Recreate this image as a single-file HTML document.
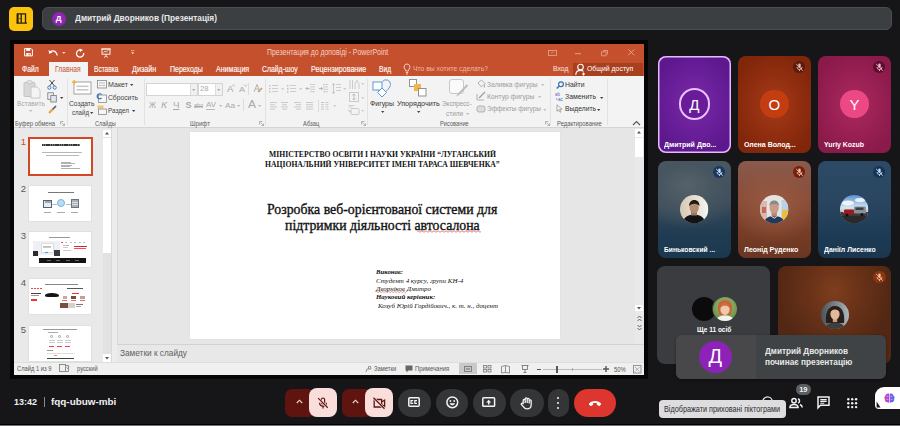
<!DOCTYPE html>
<html><head><meta charset="utf-8">
<style>
*{margin:0;padding:0;box-sizing:border-box}
html,body{width:900px;height:426px;overflow:hidden;background:#161618;font-family:"Liberation Sans",sans-serif;position:relative}
.a{position:absolute}
.t{position:absolute;white-space:pre;line-height:1}
svg{position:absolute;overflow:visible}
</style></head><body>
<div class="a" style="left:0px;top:423.6px;width:900px;height:1.2px;background:#000"></div>
<div class="a" style="left:0px;top:424.8px;width:900px;height:1.2px;background:#6e7073"></div>
<div class="a" style="left:9.2px;top:6.9px;width:23.8px;height:23.8px;background:#fbc30b;border-radius:5px"></div>
<svg style="left:15px;top:12px;" width="13" height="13" viewBox="0 0 13 13"><path d="M2.5 11.2V1.8h8v9.4M6.2 2v9.2M1.5 11.2h10.5" stroke="#2a2008" stroke-width="1.3" fill="none"/><path d="M2.6 1.8v9.4" stroke="#2a2008" stroke-width="1.9"/><circle cx="5" cy="6.6" r="0.7" fill="#2a2008"/></svg>
<div class="a" style="left:42px;top:7px;width:850px;height:23.4px;background:#3c3f42;border:1px solid #4b4e51;border-radius:6px"></div>
<div class="a" style="left:51.7px;top:11.8px;width:14px;height:14px;background:#8f25b3;border-radius:50%"></div>
<div class="a" style="left:10px;top:40px;width:637.5px;height:338.5px;background:#050505"></div>
<div class="a" style="left:13.5px;top:43.5px;width:630.5px;height:331.5px;background:#f3f3f3"></div>
<div class="a" style="left:13.5px;top:43.5px;width:630.5px;height:32.5px;background:#c4502d"></div>
<div class="a" style="left:573px;top:63px;width:70px;height:13px;background:#a8401f"></div>
<div class="a" style="left:49px;top:62px;width:39px;height:14px;background:#f3f3f3"></div>
<svg style="left:24px;top:48.4px;" width="9" height="8.5" viewBox="0 0 9 8.5"><path d="M0.6 0.6h6.6l1.2 1.2v6.1H0.6z" fill="none" stroke="#fff" stroke-width="1"/><rect x="2.2" y="0.6" width="4" height="2.3" fill="#fff"/><rect x="2.3" y="5" width="4.4" height="2.9" fill="#fff"/><rect x="4.6" y="5.6" width="1" height="1.8" fill="#c4502d"/></svg>
<svg style="left:48.4px;top:49px;" width="10" height="7.5" viewBox="0 0 10 7.5"><path d="M2.2 3.2C4 1.2 8.2 1.2 9.2 6.5" stroke="#fff" stroke-width="1.2" fill="none"/><path d="M0.5 1 L1.2 4.8 L4.6 3.4 Z" fill="#fff"/></svg>
<svg style="left:62px;top:51.5px;" width="4" height="3" viewBox="0 0 4 3"><path d="M0 0h3.6l-1.8 2z" fill="#f5d0c0"/></svg>
<svg style="left:76px;top:48.8px;" width="9" height="8.8" viewBox="0 0 9 8.8"><path d="M7.6 3.8A3.6 3.6 0 1 1 4.5 1" stroke="#fff" stroke-width="1.3" fill="none"/><path d="M3.6 -0.6 L7 1 L4 3 Z" fill="#fff"/></svg>
<svg style="left:101px;top:47.8px;" width="10" height="10" viewBox="0 0 10 10"><rect x="1" y="1" width="8" height="5.2" fill="none" stroke="#fff" stroke-width="0.9"/><path d="M0.3 1h9.4M5 6.2v1.8M3 9.5l2-1.5 2 1.5" stroke="#fff" stroke-width="0.8" fill="none"/><path d="M2.6 4.6l1.6-1.6 1.2 1 1.8-1.8" stroke="#fff" stroke-width="0.8" fill="none"/></svg>
<svg style="left:130.7px;top:50px;" width="3.5" height="4.5" viewBox="0 0 3.5 4.5"><path d="M0 0.6h3.4" stroke="#f5d0c0" stroke-width="0.7"/><path d="M0 2.2h3.4l-1.7 2z" fill="#f5d0c0"/></svg>
<svg style="left:547.5px;top:50px;" width="9" height="6" viewBox="0 0 9 6"><rect x="0.5" y="0.5" width="8" height="5" fill="none" stroke="#e8a890" stroke-width="0.8"/><path d="M3 3.2l1.5-1.2 1.5 1.2" stroke="#e8a890" stroke-width="0.7" fill="none"/></svg>
<svg style="left:575px;top:52.5px;" width="6" height="1.5" viewBox="0 0 6 1.5"><path d="M0 0.7h6" stroke="#e8a890" stroke-width="0.9"/></svg>
<svg style="left:601px;top:49.5px;" width="7" height="6" viewBox="0 0 7 6"><path d="M2 0.5h4.5v4M0.5 1.8h4.5v4h-4.5z" stroke="#e8a890" fill="none" stroke-width="0.8"/></svg>
<svg style="left:627.5px;top:49.3px;" width="6.5" height="6.5" viewBox="0 0 6.5 6.5"><path d="M0.3 0.3l6 6M6.3 0.3l-6 6" stroke="#e8a890" stroke-width="0.9"/></svg>
<svg style="left:403px;top:63px;" width="8" height="12" viewBox="0 0 8 12"><path d="M4 1a3 3 0 0 0-2 5.2c.5.5.7 1 .7 1.8h2.6c0-.8.2-1.3.7-1.8A3 3 0 0 0 4 1zM2.8 9.5h2.4M3 11h2" stroke="#f8dcd2" stroke-width="0.9" fill="none"/></svg>
<svg style="left:575px;top:63px;" width="12" height="13" viewBox="0 0 12 13"><circle cx="5.5" cy="4" r="2.8" stroke="#fff" stroke-width="1.1" fill="none"/><path d="M0.8 12c0-3 2-4.6 4.7-4.6 1.3 0 2.3.3 3 .9M8.5 9.5v3M7 11h3" stroke="#fff" stroke-width="1.1" fill="none"/></svg>
<div class="a" style="left:14px;top:127px;width:630px;height:1px;background:#d4d4d4"></div>
<div class="a" style="left:66.5px;top:79px;width:1px;height:46px;background:#e2e2e2"></div>
<div class="a" style="left:143.5px;top:79px;width:1px;height:46px;background:#e2e2e2"></div>
<div class="a" style="left:264.5px;top:79px;width:1px;height:46px;background:#e2e2e2"></div>
<div class="a" style="left:366.8px;top:79px;width:1px;height:46px;background:#e2e2e2"></div>
<div class="a" style="left:550px;top:79px;width:1px;height:46px;background:#e2e2e2"></div>
<div class="a" style="left:607px;top:79px;width:1px;height:46px;background:#e2e2e2"></div>
<svg style="left:59.5px;top:120.5px;" width="5" height="5" viewBox="0 0 5 5"><path d="M0.5 0.5h3M0.5 0.5v3M1.5 1.5l3 3M4.5 2.5v2h-2" stroke="#9a9a9a" stroke-width="0.7" fill="none"/></svg>
<svg style="left:258.5px;top:120.5px;" width="5" height="5" viewBox="0 0 5 5"><path d="M0.5 0.5h3M0.5 0.5v3M1.5 1.5l3 3M4.5 2.5v2h-2" stroke="#9a9a9a" stroke-width="0.7" fill="none"/></svg>
<svg style="left:360.5px;top:120.5px;" width="5" height="5" viewBox="0 0 5 5"><path d="M0.5 0.5h3M0.5 0.5v3M1.5 1.5l3 3M4.5 2.5v2h-2" stroke="#9a9a9a" stroke-width="0.7" fill="none"/></svg>
<svg style="left:544.5px;top:120.5px;" width="5" height="5" viewBox="0 0 5 5"><path d="M0.5 0.5h3M0.5 0.5v3M1.5 1.5l3 3M4.5 2.5v2h-2" stroke="#9a9a9a" stroke-width="0.7" fill="none"/></svg>
<svg style="left:632px;top:120px;" width="9" height="6" viewBox="0 0 9 6"><path d="M1 5l3.5-3.5L8 5" stroke="#555" stroke-width="1.1" fill="none"/></svg>
<svg style="left:23px;top:80px;" width="19" height="18" viewBox="0 0 19 18"><rect x="1" y="2.5" width="11" height="14" rx="1" fill="#d8d8d8" stroke="#c4c4c4"/><rect x="4" y="0.8" width="5" height="3" rx="1" fill="#e8e8e8" stroke="#bbb" stroke-width="0.8"/><path d="M8 7h6l3 3v8H8z" fill="#f4f4f4" stroke="#c4c4c4" stroke-width="0.9"/></svg>
<svg style="left:28.5px;top:110px;" width="4" height="3" viewBox="0 0 4 3"><path d="M0 0h3.4L1.7 2z" fill="#bbb"/></svg>
<svg style="left:47px;top:79px;" width="10" height="11" viewBox="0 0 10 11"><path d="M2.5 1l5 6M7.5 1l-5 6" stroke="#333" stroke-width="0.9"/><circle cx="2.3" cy="8.6" r="1.6" fill="none" stroke="#3b7fc4" stroke-width="1"/><circle cx="7.7" cy="8.6" r="1.6" fill="none" stroke="#3b7fc4" stroke-width="1"/></svg>
<svg style="left:47px;top:92px;" width="11" height="11" viewBox="0 0 11 11"><rect x="0.8" y="0.8" width="5.5" height="6.5" fill="#f0f0f0" stroke="#777" stroke-width="0.8"/><rect x="3.8" y="3.5" width="5.5" height="6.5" fill="#dfe8f0" stroke="#777" stroke-width="0.8"/></svg>
<svg style="left:59.5px;top:97px;" width="4" height="3" viewBox="0 0 4 3"><path d="M0 0h3.4L1.7 2z" fill="#444"/></svg>
<svg style="left:47.5px;top:105px;" width="10" height="9" viewBox="0 0 10 9"><path d="M1 8l3.5-3.5" stroke="#e8a33a" stroke-width="2.2"/><path d="M4.5 4.5l3.5-3.5" stroke="#555" stroke-width="1.6"/></svg>
<svg style="left:71px;top:79px;" width="22" height="17" viewBox="0 0 22 17"><rect x="3" y="3" width="17" height="12" fill="#fff" stroke="#9a9a9a" stroke-width="0.9"/><rect x="5.5" y="6.5" width="12" height="1.6" fill="#c8c8c8"/><rect x="5.5" y="10" width="12" height="1.6" fill="#c8c8c8"/><path d="M1 3.2h4.4M3.2 1v4.4" stroke="#e9b64a" stroke-width="1.6"/></svg>
<svg style="left:90px;top:111.5px;" width="4" height="3" viewBox="0 0 4 3"><path d="M0 0h3.4L1.7 2z" fill="#444"/></svg>
<svg style="left:96.5px;top:80px;" width="10" height="9" viewBox="0 0 10 9"><rect x="0.5" y="0.5" width="9" height="7.5" fill="#f6f6f6" stroke="#888" stroke-width="0.8"/><path d="M2 3h6M2 5.5h2.5M5.5 5.5h2.5" stroke="#aaa" stroke-width="0.8"/></svg>
<svg style="left:129.5px;top:84px;" width="4" height="3" viewBox="0 0 4 3"><path d="M0 0h3.4L1.7 2z" fill="#444"/></svg>
<svg style="left:96.5px;top:92.5px;" width="10" height="10" viewBox="0 0 10 10"><rect x="1.5" y="2" width="8" height="7.5" fill="#f6f6f6" stroke="#888" stroke-width="0.8"/><path d="M4.5 1.5a2.5 2.5 0 1 0 0 3.5" stroke="#2f6fb5" stroke-width="1.2" fill="none"/></svg>
<svg style="left:96.5px;top:105px;" width="10" height="10" viewBox="0 0 10 10"><rect x="0.5" y="0.5" width="6" height="3" fill="#f2c27a"/><rect x="1.5" y="4" width="8" height="5.5" fill="#f6f6f6" stroke="#888" stroke-width="0.8"/></svg>
<svg style="left:131.5px;top:110px;" width="4" height="3" viewBox="0 0 4 3"><path d="M0 0h3.4L1.7 2z" fill="#444"/></svg>
<div class="a" style="left:146px;top:83px;width:52px;height:12.5px;background:#fff;border:1px solid #d4d4d4"></div>
<div class="a" style="left:189.5px;top:84px;width:7.5px;height:10.5px;background:#f0f0f0;border-left:1px solid #ddd"></div>
<svg style="left:191.5px;top:88.5px;" width="4" height="3" viewBox="0 0 4 3"><path d="M0 0h3.4L1.7 2z" fill="#aaa"/></svg>
<div class="a" style="left:197.5px;top:83px;width:25px;height:12.5px;background:#fff;border:1px solid #d4d4d4"></div>
<div class="a" style="left:214.5px;top:84px;width:7.5px;height:10.5px;background:#f0f0f0;border-left:1px solid #ddd"></div>
<svg style="left:216.5px;top:88.5px;" width="4" height="3" viewBox="0 0 4 3"><path d="M0 0h3.4L1.7 2z" fill="#aaa"/></svg>
<svg style="left:232px;top:84px;" width="3" height="3" viewBox="0 0 3 3"><path d="M0 2.5l1.5-2 1.5 2" stroke="#aaa" stroke-width="0.6" fill="none"/></svg>
<svg style="left:243.5px;top:84px;" width="3" height="3" viewBox="0 0 3 3"><path d="M0 0.5l1.5 2 1.5-2" stroke="#aaa" stroke-width="0.6" fill="none"/></svg>
<div class="a" style="left:248px;top:83px;width:1px;height:12px;background:#dcdcdc"></div>
<svg style="left:253px;top:83px;" width="10" height="11" viewBox="0 0 10 11"><path d="M1 9L4 1.5 7 9M2.2 6h3.6" stroke="#aaa" stroke-width="0.9" fill="none"/><path d="M5 9l4-4" stroke="#c9a070" stroke-width="1.6"/></svg>
<div class="a" style="left:206px;top:108.5px;width:9px;height:1px;background:#bbb"></div>
<svg style="left:219px;top:105px;" width="4" height="3" viewBox="0 0 4 3"><path d="M0 0h3.4L1.7 2z" fill="#bbb"/></svg>
<svg style="left:236.5px;top:105px;" width="4" height="3" viewBox="0 0 4 3"><path d="M0 0h3.4L1.7 2z" fill="#bbb"/></svg>
<div class="a" style="left:243px;top:99px;width:1px;height:12px;background:#dcdcdc"></div>
<svg style="left:258px;top:105px;" width="4" height="3" viewBox="0 0 4 3"><path d="M0 0h3.4L1.7 2z" fill="#bbb"/></svg>
<svg style="left:269px;top:85px;" width="10" height="8" viewBox="0 0 10 8"><rect x="0" y="0" width="1.5" height="1.5" fill="#c6c6c6"/><rect x="0" y="3" width="1.5" height="1.5" fill="#c6c6c6"/><rect x="0" y="6" width="1.5" height="1.5" fill="#c6c6c6"/><rect x="3" y="0" width="6" height="1" fill="#cdcdcd"/><rect x="3" y="3" width="6" height="1" fill="#cdcdcd"/><rect x="3" y="6" width="6" height="1" fill="#cdcdcd"/></svg>
<svg style="left:281px;top:88px;" width="4" height="3" viewBox="0 0 4 3"><path d="M0 0h3.4L1.7 2z" fill="#cdcdcd"/></svg>
<svg style="left:287px;top:85px;" width="10" height="8" viewBox="0 0 10 8"><rect x="0" y="0" width="1.5" height="1.8" fill="#c6c6c6"/><rect x="3" y="0" width="6" height="1" fill="#cdcdcd"/><rect x="0" y="3" width="1.5" height="1.8" fill="#c6c6c6"/><rect x="3" y="3" width="6" height="1" fill="#cdcdcd"/><rect x="0" y="6" width="1.5" height="1.8" fill="#c6c6c6"/><rect x="3" y="6" width="6" height="1" fill="#cdcdcd"/></svg>
<svg style="left:299px;top:88px;" width="4" height="3" viewBox="0 0 4 3"><path d="M0 0h3.4L1.7 2z" fill="#cdcdcd"/></svg>
<svg style="left:306px;top:84px;" width="9" height="10" viewBox="0 0 9 10"><rect x="4" y="0.0" width="5" height="1" fill="#cdcdcd"/><rect x="4" y="2.4" width="5" height="1" fill="#cdcdcd"/><rect x="4" y="4.8" width="5" height="1" fill="#cdcdcd"/><rect x="4" y="7.199999999999999" width="5" height="1" fill="#cdcdcd"/><path d="M0 4.5h3.5M0 4.5l1.5-1.5M0 4.5l1.5 1.5" stroke="#b0b0b0" stroke-width="0.9"/></svg>
<svg style="left:318.5px;top:84px;" width="9" height="10" viewBox="0 0 9 10"><rect x="4" y="0.0" width="5" height="1" fill="#cdcdcd"/><rect x="4" y="2.4" width="5" height="1" fill="#cdcdcd"/><rect x="4" y="4.8" width="5" height="1" fill="#cdcdcd"/><rect x="4" y="7.199999999999999" width="5" height="1" fill="#cdcdcd"/><path d="M0 4.5h3.5M3.5 4.5l-1.5-1.5M3.5 4.5l-1.5 1.5" stroke="#b0b0b0" stroke-width="0.9"/></svg>
<svg style="left:331.5px;top:83px;" width="9" height="11" viewBox="0 0 9 11"><path d="M1.5 0.5v10M0 2l1.5-1.5L3 2M0 9l1.5 1.5L3 9" stroke="#bdbdbd" stroke-width="0.8" fill="none"/><rect x="4" y="1" width="5" height="1" fill="#cdcdcd"/><rect x="4" y="4" width="5" height="1" fill="#cdcdcd"/><rect x="4" y="7" width="5" height="1" fill="#cdcdcd"/></svg>
<svg style="left:343px;top:88px;" width="4" height="3" viewBox="0 0 4 3"><path d="M0 0h3.4L1.7 2z" fill="#cdcdcd"/></svg>
<svg style="left:349px;top:79px;" width="10" height="11" viewBox="0 0 10 11"><path d="M1 1v9M3.5 1v9" stroke="#c6c6c6" stroke-width="0.9"/><path d="M6 10V5l2-3.5L10 5v5" stroke="#c6c6c6" stroke-width="0.9" fill="none"/></svg>
<svg style="left:360.5px;top:83px;" width="4" height="3" viewBox="0 0 4 3"><path d="M0 0h3.4L1.7 2z" fill="#cdcdcd"/></svg>
<svg style="left:349px;top:92px;" width="10" height="10" viewBox="0 0 10 10"><rect x="0.5" y="0.5" width="9" height="9" fill="none" stroke="#c6c6c6" stroke-width="0.9"/><path d="M5 2v6M3.5 3.5L5 2l1.5 1.5M3.5 6.5L5 8l1.5-1.5" stroke="#b0b0b0" stroke-width="0.8" fill="none"/></svg>
<svg style="left:360.5px;top:97px;" width="4" height="3" viewBox="0 0 4 3"><path d="M0 0h3.4L1.7 2z" fill="#cdcdcd"/></svg>
<svg style="left:348px;top:105px;" width="12" height="10" viewBox="0 0 12 10"><path d="M0.5 0.5h6M0.5 2h4" stroke="#c6c6c6" stroke-width="0.8"/><rect x="3" y="3.5" width="8" height="6" rx="1" fill="none" stroke="#c6c6c6" stroke-width="0.9"/><path d="M0 5l3 2" stroke="#b0b0b0" stroke-width="0.8"/></svg>
<svg style="left:360.5px;top:110px;" width="4" height="3" viewBox="0 0 4 3"><path d="M0 0h3.4L1.7 2z" fill="#cdcdcd"/></svg>
<svg style="left:270px;top:102px;" width="8" height="8" viewBox="0 0 8 8"><rect x="0" y="0.0" width="7" height="1" fill="#cacaca"/><rect x="0" y="2.2" width="5" height="1" fill="#cacaca"/><rect x="0" y="4.4" width="7" height="1" fill="#cacaca"/><rect x="0" y="6.6000000000000005" width="5" height="1" fill="#cacaca"/></svg>
<svg style="left:281px;top:102px;" width="8" height="8" viewBox="0 0 8 8"><rect x="0.0" y="0.0" width="7" height="1" fill="#cacaca"/><rect x="1.0" y="2.2" width="5" height="1" fill="#cacaca"/><rect x="0.0" y="4.4" width="7" height="1" fill="#cacaca"/><rect x="1.0" y="6.6000000000000005" width="5" height="1" fill="#cacaca"/></svg>
<svg style="left:294px;top:102px;" width="8" height="8" viewBox="0 0 8 8"><rect x="0" y="0.0" width="7" height="1" fill="#cacaca"/><rect x="2" y="2.2" width="5" height="1" fill="#cacaca"/><rect x="0" y="4.4" width="7" height="1" fill="#cacaca"/><rect x="2" y="6.6000000000000005" width="5" height="1" fill="#cacaca"/></svg>
<svg style="left:305.5px;top:102px;" width="8" height="8" viewBox="0 0 8 8"><rect x="0" y="0.0" width="7" height="1" fill="#cacaca"/><rect x="0" y="2.2" width="7" height="1" fill="#cacaca"/><rect x="0" y="4.4" width="7" height="1" fill="#cacaca"/><rect x="0" y="6.6000000000000005" width="7" height="1" fill="#cacaca"/></svg>
<div class="a" style="left:317.5px;top:100px;width:1px;height:12px;background:#dcdcdc"></div>
<svg style="left:321px;top:102px;" width="8" height="8" viewBox="0 0 8 8"><rect x="0" y="0.0" width="3" height="1" fill="#cacaca"/><rect x="4.5" y="0.0" width="3" height="1" fill="#cacaca"/><rect x="0" y="2.2" width="3" height="1" fill="#cacaca"/><rect x="4.5" y="2.2" width="3" height="1" fill="#cacaca"/><rect x="0" y="4.4" width="3" height="1" fill="#cacaca"/><rect x="4.5" y="4.4" width="3" height="1" fill="#cacaca"/><rect x="0" y="6.6000000000000005" width="3" height="1" fill="#cacaca"/><rect x="4.5" y="6.6000000000000005" width="3" height="1" fill="#cacaca"/></svg>
<svg style="left:332.5px;top:105px;" width="4" height="3" viewBox="0 0 4 3"><path d="M0 0h3.4L1.7 2z" fill="#cdcdcd"/></svg>
<svg style="left:372px;top:79px;" width="21" height="18" viewBox="0 0 21 18"><path d="M10.5 2.5a4.5 4.5 0 0 1 8 3c0 3-4 6.5-8 10-4-3.5-8-7-8-10" fill="none" stroke="#5b9bd5" stroke-width="1"/><rect x="1" y="3" width="9" height="8" fill="#fff" stroke="#5b9bd5" stroke-width="1"/><path d="M10 9l4.5 4.5-4.5 4.5-4.5-4.5z" fill="#fff" stroke="#5b9bd5" stroke-width="1"/></svg>
<svg style="left:380.5px;top:111px;" width="4" height="3" viewBox="0 0 4 3"><path d="M0 0h3.4L1.7 2z" fill="#444"/></svg>
<svg style="left:409px;top:79px;" width="18" height="18" viewBox="0 0 18 18"><rect x="0.5" y="0.5" width="7" height="7" fill="#fff" stroke="#888" stroke-width="0.9"/><rect x="5" y="5" width="7" height="7" fill="#f0b84a"/><rect x="9.5" y="9.5" width="7.5" height="7.5" fill="#fff" stroke="#888" stroke-width="0.9"/></svg>
<svg style="left:416.5px;top:111px;" width="4" height="3" viewBox="0 0 4 3"><path d="M0 0h3.4L1.7 2z" fill="#444"/></svg>
<svg style="left:449px;top:79px;" width="19" height="18" viewBox="0 0 19 18"><rect x="0.5" y="0.5" width="14" height="14" rx="2.5" fill="#fafafa" stroke="#c8c8c8" stroke-width="1"/><path d="M18 5L9 14.5l-2 3 3-1.5 9-9z" fill="#bbb"/></svg>
<svg style="left:465.5px;top:113px;" width="4" height="3" viewBox="0 0 4 3"><path d="M0 0h3.4L1.7 2z" fill="#bbb"/></svg>
<svg style="left:476px;top:79px;" width="10" height="10" viewBox="0 0 10 10"><path d="M2 4l3.5-3 3.5 3.5-3.5 3.5z" fill="none" stroke="#aaa" stroke-width="0.9"/><path d="M8.5 5.5v3" stroke="#aaa" stroke-width="1"/></svg>
<svg style="left:541px;top:84px;" width="4" height="3" viewBox="0 0 4 3"><path d="M0 0h3.4L1.7 2z" fill="#c0c0c0"/></svg>
<svg style="left:476px;top:91px;" width="10" height="10" viewBox="0 0 10 10"><path d="M1 3v6h7" stroke="#aaa" stroke-width="0.9" fill="none"/><path d="M3 7l6-6" stroke="#999" stroke-width="1.1"/></svg>
<svg style="left:537.5px;top:96px;" width="4" height="3" viewBox="0 0 4 3"><path d="M0 0h3.4L1.7 2z" fill="#c0c0c0"/></svg>
<svg style="left:476px;top:104px;" width="10" height="9" viewBox="0 0 10 9"><rect x="1" y="2" width="8" height="6" rx="2" fill="#ddd" stroke="#aaa" stroke-width="0.9"/></svg>
<svg style="left:543px;top:108.5px;" width="4" height="3" viewBox="0 0 4 3"><path d="M0 0h3.4L1.7 2z" fill="#c0c0c0"/></svg>
<svg style="left:555.5px;top:80.8px;" width="8" height="8" viewBox="0 0 8 8"><circle cx="5" cy="3.2" r="2.4" fill="none" stroke="#2e75b6" stroke-width="1.2"/><path d="M3.3 5l-2.6 2.6" stroke="#2e75b6" stroke-width="1.4"/></svg>
<svg style="left:555px;top:91.5px;" width="10" height="10" viewBox="0 0 10 10"><text x="0" y="4" font-size="4.5" fill="#7a5fa8" font-family="Liberation Sans">ab</text><text x="3" y="9" font-size="4.5" fill="#2e75b6" font-family="Liberation Sans">ac</text><path d="M1 6.5l1.5 1" stroke="#2e75b6" stroke-width="0.8"/></svg>
<svg style="left:600px;top:96.5px;" width="4" height="3" viewBox="0 0 4 3"><path d="M0 0h3.4L1.7 2z" fill="#444"/></svg>
<svg style="left:556px;top:104px;" width="8" height="9" viewBox="0 0 8 9"><path d="M1 0.8v6.5l1.7-1.6 1.3 2.6 1-.5-1.3-2.5h2.4z" fill="#fafafa" stroke="#888" stroke-width="0.7"/></svg>
<svg style="left:597px;top:108.5px;" width="4" height="3" viewBox="0 0 4 3"><path d="M0 0h3.4L1.7 2z" fill="#444"/></svg>
<div class="t" style="left:55.85px;top:14.68px;font-size:8px;font-weight:bold;font-style:normal;color:#fff;font-family:'Liberation Sans',sans-serif;">Д</div>
<div class="t" style="left:75.00px;top:13.40px;font-size:9.8px;font-weight:bold;font-style:normal;color:#e8e8e8;font-family:'Liberation Sans',sans-serif;transform:scaleX(0.8455);transform-origin:left top;">Дмитрий Дворников (Презентація)</div>
<div class="t" style="left:267.00px;top:48.88px;font-size:8.2px;font-weight:normal;font-style:normal;color:#f6d2c4;font-family:'Liberation Sans',sans-serif;transform:scaleX(0.8443);transform-origin:left top;">Презентация до доповіді - PowerPoint</div>
<div class="t" style="left:21.80px;top:65.23px;font-size:8.5px;font-weight:normal;font-style:normal;color:#fff8f5;font-family:'Liberation Sans',sans-serif;transform:scaleX(0.7943);transform-origin:left top;-webkit-text-stroke:0.15px #fff;">Файл</div>
<div class="t" style="left:94.00px;top:65.23px;font-size:8.5px;font-weight:normal;font-style:normal;color:#fff8f5;font-family:'Liberation Sans',sans-serif;transform:scaleX(0.7723);transform-origin:left top;-webkit-text-stroke:0.15px #fff;">Вставка</div>
<div class="t" style="left:131.80px;top:65.23px;font-size:8.5px;font-weight:normal;font-style:normal;color:#fff8f5;font-family:'Liberation Sans',sans-serif;transform:scaleX(0.8470);transform-origin:left top;-webkit-text-stroke:0.15px #fff;">Дизайн</div>
<div class="t" style="left:169.50px;top:65.23px;font-size:8.5px;font-weight:normal;font-style:normal;color:#fff8f5;font-family:'Liberation Sans',sans-serif;transform:scaleX(0.8252);transform-origin:left top;-webkit-text-stroke:0.15px #fff;">Переходы</div>
<div class="t" style="left:215.80px;top:65.23px;font-size:8.5px;font-weight:normal;font-style:normal;color:#fff8f5;font-family:'Liberation Sans',sans-serif;transform:scaleX(0.8320);transform-origin:left top;-webkit-text-stroke:0.15px #fff;">Анимация</div>
<div class="t" style="left:262.40px;top:65.23px;font-size:8.5px;font-weight:normal;font-style:normal;color:#fff8f5;font-family:'Liberation Sans',sans-serif;transform:scaleX(0.8079);transform-origin:left top;-webkit-text-stroke:0.15px #fff;">Слайд-шоу</div>
<div class="t" style="left:310.70px;top:65.23px;font-size:8.5px;font-weight:normal;font-style:normal;color:#fff8f5;font-family:'Liberation Sans',sans-serif;transform:scaleX(0.8425);transform-origin:left top;-webkit-text-stroke:0.15px #fff;">Рецензирование</div>
<div class="t" style="left:379.00px;top:65.23px;font-size:8.5px;font-weight:normal;font-style:normal;color:#fff8f5;font-family:'Liberation Sans',sans-serif;transform:scaleX(0.7803);transform-origin:left top;-webkit-text-stroke:0.15px #fff;">Вид</div>
<div class="t" style="left:55.00px;top:65.23px;font-size:8.5px;font-weight:normal;font-style:normal;color:#c4502d;font-family:'Liberation Sans',sans-serif;transform:scaleX(0.7944);transform-origin:left top;">Главная</div>
<div class="t" style="left:413.00px;top:65.28px;font-size:8px;font-weight:normal;font-style:normal;color:#f0b9a6;font-family:'Liberation Sans',sans-serif;transform:scaleX(0.8481);transform-origin:left top;">Что вы хотите сделать?</div>
<div class="t" style="left:552.60px;top:65.28px;font-size:8px;font-weight:normal;font-style:normal;color:#fbe9e3;font-family:'Liberation Sans',sans-serif;transform:scaleX(0.8509);transform-origin:left top;">Вход</div>
<div class="t" style="left:586.70px;top:65.28px;font-size:8px;font-weight:normal;font-style:normal;color:#ffffff;font-family:'Liberation Sans',sans-serif;transform:scaleX(0.8614);transform-origin:left top;">Общий доступ</div>
<div class="t" style="left:15.30px;top:119.77px;font-size:7px;font-weight:normal;font-style:normal;color:#5a5a5a;font-family:'Liberation Sans',sans-serif;transform:scaleX(0.8410);transform-origin:left top;">Буфер обмена</div>
<div class="t" style="left:95.30px;top:119.77px;font-size:7px;font-weight:normal;font-style:normal;color:#5a5a5a;font-family:'Liberation Sans',sans-serif;transform:scaleX(0.7944);transform-origin:left top;">Слайды</div>
<div class="t" style="left:190.00px;top:119.77px;font-size:7px;font-weight:normal;font-style:normal;color:#5a5a5a;font-family:'Liberation Sans',sans-serif;transform:scaleX(0.8684);transform-origin:left top;">Шрифт</div>
<div class="t" style="left:303.40px;top:119.77px;font-size:7px;font-weight:normal;font-style:normal;color:#5a5a5a;font-family:'Liberation Sans',sans-serif;transform:scaleX(0.8352);transform-origin:left top;">Абзац</div>
<div class="t" style="left:440.00px;top:119.77px;font-size:7px;font-weight:normal;font-style:normal;color:#5a5a5a;font-family:'Liberation Sans',sans-serif;transform:scaleX(0.8169);transform-origin:left top;">Рисование</div>
<div class="t" style="left:556.50px;top:119.77px;font-size:7px;font-weight:normal;font-style:normal;color:#5a5a5a;font-family:'Liberation Sans',sans-serif;transform:scaleX(0.8383);transform-origin:left top;">Редактирование</div>
<div class="t" style="left:16.70px;top:100.33px;font-size:7.5px;font-weight:normal;font-style:normal;color:#a8a8a8;font-family:'Liberation Sans',sans-serif;transform:scaleX(0.8807);transform-origin:left top;">Вставить</div>
<div class="t" style="left:69.30px;top:100.33px;font-size:7.5px;font-weight:normal;font-style:normal;color:#444;font-family:'Liberation Sans',sans-serif;transform:scaleX(0.8912);transform-origin:left top;">Создать</div>
<div class="t" style="left:71.50px;top:108.53px;font-size:7.5px;font-weight:normal;font-style:normal;color:#444;font-family:'Liberation Sans',sans-serif;transform:scaleX(0.8148);transform-origin:left top;">слайд</div>
<div class="t" style="left:108.00px;top:80.83px;font-size:7.5px;font-weight:normal;font-style:normal;color:#444;font-family:'Liberation Sans',sans-serif;transform:scaleX(0.9422);transform-origin:left top;">Макет</div>
<div class="t" style="left:108.00px;top:93.62px;font-size:7.5px;font-weight:normal;font-style:normal;color:#444;font-family:'Liberation Sans',sans-serif;transform:scaleX(0.8999);transform-origin:left top;">Сбросить</div>
<div class="t" style="left:108.00px;top:106.83px;font-size:7.5px;font-weight:normal;font-style:normal;color:#444;font-family:'Liberation Sans',sans-serif;transform:scaleX(0.8471);transform-origin:left top;">Раздел</div>
<div class="t" style="left:199.70px;top:85.38px;font-size:8px;font-weight:normal;font-style:normal;color:#aaa;font-family:'Liberation Sans',sans-serif;transform:scaleX(0.9552);transform-origin:left top;">28</div>
<div class="t" style="left:226.50px;top:85.33px;font-size:8.5px;font-weight:normal;font-style:normal;color:#a9a9a9;font-family:'Liberation Sans',sans-serif;transform:scaleX(1.1464);transform-origin:left top;">A</div>
<div class="t" style="left:238.50px;top:85.83px;font-size:7.5px;font-weight:normal;font-style:normal;color:#a9a9a9;font-family:'Liberation Sans',sans-serif;transform:scaleX(1.1993);transform-origin:left top;">A</div>
<div class="t" style="left:148.50px;top:101.33px;font-size:8.5px;font-weight:normal;font-style:normal;color:#a9a9a9;font-family:'Liberation Sans',sans-serif;transform:scaleX(0.8918);transform-origin:left top;">Ж</div>
<div class="t" style="left:160.50px;top:101.33px;font-size:8.5px;font-weight:normal;font-style:normal;color:#a9a9a9;font-family:'Liberation Sans',sans-serif;transform:scaleX(1.2115);transform-origin:left top;font-style:italic;">К</div>
<div class="t" style="left:172.50px;top:101.33px;font-size:8.5px;font-weight:normal;font-style:normal;color:#a9a9a9;font-family:'Liberation Sans',sans-serif;transform:scaleX(1.1472);transform-origin:left top;text-decoration:underline;">Ч</div>
<div class="t" style="left:185.50px;top:101.09px;font-size:9px;font-weight:normal;font-style:normal;color:#a9a9a9;font-family:'Liberation Sans',sans-serif;font-weight:bold;">S</div>
<div class="t" style="left:194.00px;top:102.81px;font-size:6.5px;font-weight:normal;font-style:normal;color:#a9a9a9;font-family:'Liberation Sans',sans-serif;transform:scaleX(0.8588);transform-origin:left top;text-decoration:line-through;">abc</div>
<div class="t" style="left:205.50px;top:101.07px;font-size:7px;font-weight:normal;font-style:normal;color:#a9a9a9;font-family:'Liberation Sans',sans-serif;transform:scaleX(1.1339);transform-origin:left top;">AV</div>
<div class="t" style="left:225.00px;top:101.83px;font-size:7.5px;font-weight:normal;font-style:normal;color:#a9a9a9;font-family:'Liberation Sans',sans-serif;transform:scaleX(1.0900);transform-origin:left top;">Aa</div>
<div class="t" style="left:247.50px;top:100.10px;font-size:10px;font-weight:normal;font-style:normal;color:#a9a9a9;font-family:'Liberation Sans',sans-serif;transform:scaleX(1.1993);transform-origin:left top;">A</div>
<div class="t" style="left:370.00px;top:99.92px;font-size:7.5px;font-weight:normal;font-style:normal;color:#333;font-family:'Liberation Sans',sans-serif;transform:scaleX(0.9283);transform-origin:left top;">Фигуры</div>
<div class="t" style="left:396.50px;top:99.92px;font-size:7.5px;font-weight:normal;font-style:normal;color:#333;font-family:'Liberation Sans',sans-serif;transform:scaleX(0.9567);transform-origin:left top;">Упорядочить</div>
<div class="t" style="left:441.90px;top:99.92px;font-size:7.5px;font-weight:normal;font-style:normal;color:#9c9c9c;font-family:'Liberation Sans',sans-serif;transform:scaleX(0.8451);transform-origin:left top;">Экспресс-</div>
<div class="t" style="left:446.00px;top:109.83px;font-size:7.5px;font-weight:normal;font-style:normal;color:#9c9c9c;font-family:'Liberation Sans',sans-serif;transform:scaleX(0.8525);transform-origin:left top;">стили</div>
<div class="t" style="left:487.00px;top:80.83px;font-size:7.5px;font-weight:normal;font-style:normal;color:#9c9c9c;font-family:'Liberation Sans',sans-serif;transform:scaleX(0.8835);transform-origin:left top;">Заливка фигуры</div>
<div class="t" style="left:487.00px;top:92.73px;font-size:7.5px;font-weight:normal;font-style:normal;color:#9c9c9c;font-family:'Liberation Sans',sans-serif;transform:scaleX(0.9038);transform-origin:left top;">Контур фигуры</div>
<div class="t" style="left:487.00px;top:105.23px;font-size:7.5px;font-weight:normal;font-style:normal;color:#9c9c9c;font-family:'Liberation Sans',sans-serif;transform:scaleX(0.8640);transform-origin:left top;">Эффекты фигуры</div>
<div class="t" style="left:565.00px;top:80.53px;font-size:7.5px;font-weight:normal;font-style:normal;color:#333;font-family:'Liberation Sans',sans-serif;transform:scaleX(0.9111);transform-origin:left top;">Найти</div>
<div class="t" style="left:565.00px;top:93.12px;font-size:7.5px;font-weight:normal;font-style:normal;color:#333;font-family:'Liberation Sans',sans-serif;transform:scaleX(0.9198);transform-origin:left top;">Заменить</div>
<div class="t" style="left:565.00px;top:105.23px;font-size:7.5px;font-weight:normal;font-style:normal;color:#333;font-family:'Liberation Sans',sans-serif;transform:scaleX(0.8960);transform-origin:left top;">Выделить</div>
<div class="a" style="left:14px;top:128px;width:97px;height:234px;background:#e9e9e9"></div>
<div class="a" style="left:102.5px;top:129.5px;width:8px;height:232px;background:#e2e2e2"></div>
<div class="a" style="left:102.5px;top:129.5px;width:8px;height:7.5px;background:#fff"></div>
<svg style="left:104.5px;top:131.5px;" width="4" height="3" viewBox="0 0 4 3"><path d="M0 2.5h4L2 0z" fill="#555"/></svg>
<div class="a" style="left:102.5px;top:137.8px;width:8px;height:115px;background:#fff"></div>
<div class="a" style="left:102.5px;top:354px;width:8px;height:7.5px;background:#fff"></div>
<svg style="left:104.5px;top:356.5px;" width="4" height="3" viewBox="0 0 4 3"><path d="M0 0h4L2 2.5z" fill="#555"/></svg>
<div class="a" style="left:111px;top:128px;width:1px;height:234px;background:#d9d9d9"></div>
<div class="a" style="left:112px;top:128px;width:5px;height:234px;background:#ececec"></div>
<div class="a" style="left:117px;top:128px;width:527px;height:216px;background:#e6e6e6"></div>
<div class="a" style="left:116.5px;top:128px;width:1px;height:234px;background:#dadada"></div>
<div class="a" style="left:634.5px;top:129px;width:8.5px;height:215px;background:#e9e9e9"></div>
<div class="a" style="left:634.5px;top:129px;width:8.5px;height:7.7px;background:#fff"></div>
<svg style="left:636.8px;top:131.2px;" width="4" height="3" viewBox="0 0 4 3"><path d="M0 2.5h4L2 0z" fill="#555"/></svg>
<div class="a" style="left:634.5px;top:138px;width:8.5px;height:18.5px;background:#fff"></div>
<div class="a" style="left:634.5px;top:304.7px;width:8.5px;height:6.6px;background:#fff"></div>
<svg style="left:636.8px;top:306.7px;" width="4" height="3" viewBox="0 0 4 3"><path d="M0 0h4L2 2.5z" fill="#555"/></svg>
<svg style="left:636.5px;top:314.5px;" width="5" height="7" viewBox="0 0 5 7"><path d="M0.5 3l2-2 2 2M0.5 6l2-2 2 2" stroke="#555" stroke-width="0.9" fill="none"/></svg>
<svg style="left:636.5px;top:324px;" width="5" height="7" viewBox="0 0 5 7"><path d="M0.5 1l2 2 2-2M0.5 4l2 2 2-2" stroke="#555" stroke-width="0.9" fill="none"/></svg>
<div class="a" style="left:117px;top:344px;width:527px;height:1px;background:#d2d2d2"></div>
<div class="a" style="left:117px;top:345px;width:527px;height:17px;background:#e8e8e8"></div>
<div class="a" style="left:14px;top:362px;width:630px;height:13px;background:#f0f0f0"></div>
<div class="a" style="left:14px;top:362px;width:630px;height:1px;background:#dedede"></div>
<svg style="left:59px;top:364px;" width="10" height="9" viewBox="0 0 10 9"><rect x="0.5" y="0.5" width="6" height="7" fill="none" stroke="#777" stroke-width="0.8"/><path d="M6.5 1.5h3v6h-3M7.5 3.5l1 1 1.5-2" stroke="#777" stroke-width="0.8" fill="none"/></svg>
<svg style="left:365px;top:364.5px;" width="7" height="8" viewBox="0 0 7 8"><path d="M1 7l1-3h4M3.5 4V1.5h2L6 4" stroke="#888" stroke-width="0.9" fill="none"/></svg>
<svg style="left:405px;top:364.5px;" width="8" height="8" viewBox="0 0 8 8"><path d="M0.5 0.5h7v5h-4l-2 2v-2h-1z" fill="#666"/></svg>
<div class="a" style="left:459.3px;top:362.8px;width:18px;height:11.6px;background:#c9c9c9"></div>
<svg style="left:464px;top:365.5px;" width="8" height="6" viewBox="0 0 8 6"><rect x="0.5" y="0.5" width="7" height="5" fill="none" stroke="#777" stroke-width="0.9"/><rect x="2" y="2" width="4" height="2" fill="#999"/></svg>
<svg style="left:483px;top:365px;" width="9" height="8" viewBox="0 0 9 8"><rect x="0.5" y="0.5" width="3" height="2.5" fill="none" stroke="#777" stroke-width="0.8"/><rect x="5" y="0.5" width="3" height="2.5" fill="none" stroke="#777" stroke-width="0.8"/><rect x="0.5" y="4.5" width="3" height="2.5" fill="none" stroke="#777" stroke-width="0.8"/><rect x="5" y="4.5" width="3" height="2.5" fill="none" stroke="#777" stroke-width="0.8"/></svg>
<svg style="left:501px;top:365px;" width="9" height="8" viewBox="0 0 9 8"><path d="M0.5 1.5L4.5 0.5v7L0.5 8zM4.5 0.5L8.5 1.5V8L4.5 7.5" fill="none" stroke="#777" stroke-width="0.8"/></svg>
<svg style="left:521px;top:365px;" width="8" height="8" viewBox="0 0 8 8"><path d="M0.5 0.5h7M1.5 0.5v4h5v-4M4 4.5V7M2.5 7.5h3" stroke="#777" stroke-width="0.9" fill="none"/></svg>
<div class="a" style="left:536.5px;top:368.8px;width:4.5px;height:1.2px;background:#555"></div>
<div class="a" style="left:543px;top:368.8px;width:59px;height:1px;background:#bdbdbd"></div>
<div class="a" style="left:555.5px;top:365.5px;width:2px;height:7.5px;background:#555"></div>
<div class="a" style="left:572px;top:367.5px;width:1px;height:3px;background:#aaa"></div>
<svg style="left:602.5px;top:366px;" width="6" height="6" viewBox="0 0 6 6"><path d="M3 0v6M0 3h6" stroke="#555" stroke-width="1.4"/></svg>
<svg style="left:632.5px;top:364.8px;" width="8.5" height="8.5" viewBox="0 0 8.5 8.5"><rect x="0.5" y="0.5" width="7.5" height="7.5" fill="none" stroke="#8a8a8a" stroke-width="0.9"/><path d="M2 2l4.5 4.5M6.5 2L2 6.5" stroke="#9a9a9a" stroke-width="0.8"/></svg>
<div class="a" style="left:190px;top:131.5px;width:369.5px;height:207.2px;background:#fff;box-shadow:0 0 1px #cfcfcf"></div>
<svg style="left:417px;top:230.2px;" width="63" height="3" viewBox="0 0 63 3"><path d="M0 1.5 q1 -1.5 2 0 q1 1.5 2 0 q1 -1.5 2 0 q1 1.5 2 0 q1 -1.5 2 0 q1 1.5 2 0 q1 -1.5 2 0 q1 1.5 2 0 q1 -1.5 2 0 q1 1.5 2 0 q1 -1.5 2 0 q1 1.5 2 0 q1 -1.5 2 0 q1 1.5 2 0 q1 -1.5 2 0 q1 1.5 2 0 q1 -1.5 2 0 q1 1.5 2 0 q1 -1.5 2 0 q1 1.5 2 0 q1 -1.5 2 0 q1 1.5 2 0 q1 -1.5 2 0 q1 1.5 2 0 q1 -1.5 2 0 q1 1.5 2 0 q1 -1.5 2 0 q1 1.5 2 0 q1 -1.5 2 0 q1 1.5 2 0 q1 -1.5 2 0 q1 1.5 2 0" stroke="#e04848" stroke-width="0.7" fill="none"/></svg>
<svg style="left:376px;top:291px;" width="31" height="2" viewBox="0 0 31 2"><path d="M0 1 q0.75 -1 1.5 0 q0.75 1 1.5 0 q0.75 -1 1.5 0 q0.75 1 1.5 0 q0.75 -1 1.5 0 q0.75 1 1.5 0 q0.75 -1 1.5 0 q0.75 1 1.5 0 q0.75 -1 1.5 0 q0.75 1 1.5 0 q0.75 -1 1.5 0 q0.75 1 1.5 0 q0.75 -1 1.5 0 q0.75 1 1.5 0 q0.75 -1 1.5 0 q0.75 1 1.5 0 q0.75 -1 1.5 0 q0.75 1 1.5 0 q0.75 -1 1.5 0 q0.75 1 1.5 0" stroke="#e04848" stroke-width="0.6" fill="none"/></svg>
<div class="t" style="left:119.70px;top:349.49px;font-size:9px;font-weight:normal;font-style:normal;color:#5e5e5e;font-family:'Liberation Sans',sans-serif;transform:scaleX(0.9191);transform-origin:left top;">Заметки к слайду</div>
<div class="t" style="left:16.80px;top:365.38px;font-size:7.8px;font-weight:normal;font-style:normal;color:#555;font-family:'Liberation Sans',sans-serif;transform:scaleX(0.7391);transform-origin:left top;">Слайд 1 из 9</div>
<div class="t" style="left:77.00px;top:365.38px;font-size:7.8px;font-weight:normal;font-style:normal;color:#555;font-family:'Liberation Sans',sans-serif;transform:scaleX(0.7360);transform-origin:left top;">русский</div>
<div class="t" style="left:374.00px;top:365.48px;font-size:7.8px;font-weight:normal;font-style:normal;color:#555;font-family:'Liberation Sans',sans-serif;transform:scaleX(0.7475);transform-origin:left top;">Заметки</div>
<div class="t" style="left:415.00px;top:365.48px;font-size:7.8px;font-weight:normal;font-style:normal;color:#555;font-family:'Liberation Sans',sans-serif;transform:scaleX(0.7594);transform-origin:left top;">Примечания</div>
<div class="t" style="left:614.20px;top:365.62px;font-size:7.5px;font-weight:normal;font-style:normal;color:#555;font-family:'Liberation Sans',sans-serif;transform:scaleX(0.7794);transform-origin:left top;">50%</div>
<div class="t" style="left:268.80px;top:152.47px;font-size:7.2px;font-weight:bold;font-style:normal;color:#111;font-family:'Liberation Serif',serif;transform:scaleX(1.0672);transform-origin:left top;">МІНІСТЕРСТВО ОСВІТИ І НАУКИ УКРАЇНИ “ЛУГАНСЬКИЙ</div>
<div class="t" style="left:264.60px;top:161.87px;font-size:7.2px;font-weight:bold;font-style:normal;color:#111;font-family:'Liberation Serif',serif;transform:scaleX(1.0664);transform-origin:left top;">НАЦІОНАЛЬНИЙ УНІВЕРСИТЕТ ІМЕНІ ТАРАСА ШЕВЧЕНКА”</div>
<div class="t" style="left:266.90px;top:203.14px;font-size:14px;font-weight:normal;font-style:normal;color:#111;font-family:'Liberation Serif',serif;transform:scaleX(0.9866);transform-origin:left top;-webkit-text-stroke:0.35px #111;">Розробка веб-орієнтованої системи для</div>
<div class="t" style="left:284.70px;top:219.14px;font-size:14px;font-weight:normal;font-style:normal;color:#111;font-family:'Liberation Serif',serif;transform:scaleX(0.9858);transform-origin:left top;-webkit-text-stroke:0.35px #111;">підтримки діяльності автосалона</div>
<div class="t" style="left:376.30px;top:268.81px;font-size:6.5px;font-weight:bold;font-style:italic;color:#111;font-family:'Liberation Serif',serif;transform:scaleX(1.0354);transform-origin:left top;">Виконав:</div>
<div class="t" style="left:376.30px;top:277.71px;font-size:6.5px;font-weight:normal;font-style:italic;color:#111;font-family:'Liberation Serif',serif;transform:scaleX(1.0728);transform-origin:left top;">Студент 4 курсу, групи КН-4</div>
<div class="t" style="left:376.30px;top:285.71px;font-size:6.5px;font-weight:normal;font-style:italic;color:#111;font-family:'Liberation Serif',serif;transform:scaleX(1.0655);transform-origin:left top;">Дворніков Дмитро</div>
<div class="t" style="left:376.30px;top:293.71px;font-size:6.5px;font-weight:bold;font-style:italic;color:#111;font-family:'Liberation Serif',serif;transform:scaleX(1.0611);transform-origin:left top;">Науковий керівник:</div>
<div class="t" style="left:378.00px;top:302.62px;font-size:6.5px;font-weight:normal;font-style:italic;color:#111;font-family:'Liberation Serif',serif;transform:scaleX(1.0645);transform-origin:left top;">Козуб Юрій Гордійович., к. т. н., доцент</div>
<div class="a" style="left:27.5px;top:137.4px;width:65px;height:38.6px;background:#fff;border:2px solid #d24726"></div>

<div class="a" style="left:42px;top:143.5px;width:38px;height:2.2px;background:repeating-linear-gradient(90deg,#333 0 1.2px,#777 1.2px 1.8px)"></div>
<div class="a" style="left:42px;top:152px;width:40px;height:0.7px;background:#b8b8b8"></div>
<div class="a" style="left:45.7px;top:155px;width:33px;height:0.7px;background:#b8b8b8"></div>
<div class="a" style="left:61px;top:161.5px;width:10px;height:0.6px;background:#b0b0b0"></div>
<div class="a" style="left:61px;top:163.0px;width:14px;height:0.6px;background:#b0b0b0"></div>
<div class="a" style="left:61px;top:164.5px;width:11px;height:0.6px;background:#b0b0b0"></div>
<div class="a" style="left:61px;top:166.0px;width:9px;height:0.6px;background:#b0b0b0"></div>
<div class="a" style="left:61px;top:167.5px;width:19px;height:0.6px;background:#b0b0b0"></div>
<div class="a" style="left:29.3px;top:185.8px;width:62px;height:35px;background:#fff;box-shadow:0 0 0 0.5px #d8d8d8"></div>

<div class="a" style="left:48px;top:192.3px;width:26px;height:0.8px;background:#777"></div>
<div class="a" style="left:43px;top:199.5px;width:9.3px;height:8px;background:#e8ecf0;border:0.8px solid #5a6470"></div>
<div class="a" style="left:44.5px;top:201px;width:6px;height:2px;background:#9aa8b8"></div>
<div class="a" style="left:52.3px;top:203.5px;width:5px;height:0.5px;background:#bbb"></div>
<div class="a" style="left:57.3px;top:199.3px;width:8.2px;height:8.2px;background:#b8dcf6;border:0.7px solid #7ab0e0;border-radius:50%"></div>
<div class="a" style="left:65.5px;top:203.5px;width:5.3px;height:0.5px;background:#bbb"></div>
<div class="a" style="left:70.8px;top:199px;width:8.5px;height:9px;background:#a8b0b8;border:0.6px solid #6a7480"></div>
<div class="a" style="left:72px;top:201.5px;width:6px;height:0.5px;background:#e0e0e0"></div>
<div class="a" style="left:72px;top:204px;width:6px;height:0.5px;background:#e0e0e0"></div>
<div class="a" style="left:44px;top:211.5px;width:7px;height:0.8px;background:#aaa"></div>
<div class="a" style="left:57px;top:211.5px;width:8px;height:0.8px;background:#aaa"></div>
<div class="a" style="left:71px;top:211.5px;width:7px;height:0.8px;background:#aaa"></div>
<div class="a" style="left:29.3px;top:232.3px;width:62px;height:35px;background:#fff;box-shadow:0 0 0 0.5px #d8d8d8"></div>

<div class="a" style="left:49px;top:237px;width:21px;height:0.7px;background:#999"></div>
<div class="a" style="left:33px;top:241.4px;width:27px;height:14px;background:#eef0f3"></div>
<div class="a" style="left:41.5px;top:244px;width:11px;height:7.5px;background:#fff;box-shadow:0 0 0 0.5px #c8c8c8"></div>
<div class="a" style="left:43px;top:245.5px;width:8px;height:0.5px;background:#bbb"></div>
<div class="a" style="left:43px;top:247.2px;width:8px;height:0.5px;background:#ccc"></div>
<div class="a" style="left:44.5px;top:252px;width:3px;height:1.2px;background:#3aa0e8"></div>
<div class="a" style="left:33px;top:250.5px;width:5px;height:5px;background:#2a2a2e"></div>
<div class="a" style="left:54px;top:250px;width:6px;height:5.5px;background:#3a3a40"></div>
<div class="a" style="left:61px;top:241.6px;width:1.6px;height:1.6px;background:#e33;border-radius:50%"></div>
<div class="a" style="left:65px;top:242px;width:2px;height:0.7px;background:#bbb"></div>
<div class="a" style="left:69.5px;top:242px;width:2px;height:0.7px;background:#bbb"></div>
<div class="a" style="left:74px;top:242px;width:2px;height:0.7px;background:#bbb"></div>
<div class="a" style="left:78.5px;top:242px;width:2px;height:0.7px;background:#bbb"></div>
<div class="a" style="left:83px;top:242px;width:2px;height:0.7px;background:#bbb"></div>
<div class="a" style="left:63px;top:244.5px;width:6px;height:0.5px;background:#bbb"></div>
<div class="a" style="left:63px;top:246.5px;width:5px;height:0.5px;background:#ccc"></div>
<div class="a" style="left:74px;top:245.6px;width:12.5px;height:1.2px;background:#d23"></div>
<div class="a" style="left:74px;top:247.6px;width:12px;height:0.9px;background:#e55"></div>
<div class="a" style="left:63px;top:250px;width:8px;height:0.5px;background:#ccc"></div>
<div class="a" style="left:38.6px;top:257.9px;width:47px;height:5.1px;background:#141414"></div>
<div class="a" style="left:47px;top:259.5px;width:4px;height:1.8px;background:#666"></div>
<div class="a" style="left:56px;top:259.5px;width:4px;height:1.8px;background:#666"></div>
<div class="a" style="left:66px;top:259.5px;width:4px;height:1.8px;background:#666"></div>
<div class="a" style="left:75px;top:259.5px;width:4px;height:1.8px;background:#666"></div>
<div class="a" style="left:29.3px;top:279.3px;width:62px;height:35px;background:#fff;box-shadow:0 0 0 0.5px #d8d8d8"></div>

<div class="a" style="left:44.5px;top:283.5px;width:33px;height:0.7px;background:#888"></div>
<div class="a" style="left:31px;top:287.8px;width:1.6px;height:0.6px;background:#e44"></div>
<div class="a" style="left:34px;top:287.8px;width:1.6px;height:0.6px;background:#e44"></div>
<div class="a" style="left:37px;top:287.8px;width:1.6px;height:0.6px;background:#e44"></div>
<div class="a" style="left:40px;top:287.8px;width:1.6px;height:0.6px;background:#e44"></div>
<div class="a" style="left:30.5px;top:292.5px;width:10.5px;height:1.5px;background:#444"></div>
<div class="a" style="left:30.5px;top:295px;width:8px;height:0.6px;background:#999"></div>
<div class="a" style="left:30.5px;top:299px;width:6px;height:1.5px;background:#e33"></div>
<div class="a" style="left:44.5px;top:292.5px;width:14px;height:4.8px;background:#161616;border-radius:45% 50% 25% 25%"></div>
<div class="a" style="left:66.8px;top:288px;width:16.5px;height:0.9px;background:#555"></div>
<div class="a" style="left:71.5px;top:292.5px;width:7px;height:1.3px;background:#e33"></div>
<div class="a" style="left:63px;top:296px;width:4px;height:2.5px;background:#c9a8a0"></div>
<div class="a" style="left:71px;top:296px;width:5px;height:2.5px;background:#7a4a3a"></div>
<div class="a" style="left:80px;top:296px;width:5px;height:2.5px;background:#c0a090"></div>
<div class="a" style="left:62px;top:299.5px;width:5px;height:0.6px;background:#e66"></div>
<div class="a" style="left:71px;top:299.5px;width:5px;height:0.6px;background:#e66"></div>
<div class="a" style="left:80px;top:299.5px;width:5px;height:0.6px;background:#e66"></div>
<div class="a" style="left:59.8px;top:302.5px;width:8px;height:5.8px;background:#7a5040"></div>
<div class="a" style="left:67.8px;top:302.5px;width:7px;height:5.8px;background:#d8d0c8"></div>
<div class="a" style="left:76px;top:304px;width:7px;height:0.7px;background:#777"></div>
<div class="a" style="left:76px;top:306px;width:5px;height:0.6px;background:#aaa"></div>
<div class="a" style="left:29.3px;top:326.3px;width:62px;height:35px;background:#fff;box-shadow:0 0 0 0.5px #d8d8d8"></div>

<div class="a" style="left:43px;top:329px;width:34px;height:0.7px;background:#999"></div>
<div class="a" style="left:48px;top:332px;width:10px;height:0.6px;background:#aaa"></div>
<div class="a" style="left:49.5px;top:334.5px;width:3.6px;height:3.6px;background:#fff;border:0.7px solid #999;border-radius:50%"></div>
<div class="a" style="left:48.5px;top:340px;width:6px;height:0.5px;background:#ccc"></div>
<div class="a" style="left:48.5px;top:342px;width:6px;height:0.5px;background:#ccc"></div>
<div class="a" style="left:48.8px;top:345.5px;width:5.2px;height:1.6px;background:#e8404a"></div>
<div class="a" style="left:57.5px;top:334.5px;width:3.6px;height:3.6px;background:#fff;border:0.7px solid #999;border-radius:50%"></div>
<div class="a" style="left:56.5px;top:340px;width:6px;height:0.5px;background:#ccc"></div>
<div class="a" style="left:56.5px;top:342px;width:6px;height:0.5px;background:#ccc"></div>
<div class="a" style="left:56.8px;top:345.5px;width:5.2px;height:1.6px;background:#e8404a"></div>
<div class="a" style="left:65.5px;top:334.5px;width:3.6px;height:3.6px;background:#fff;border:0.7px solid #999;border-radius:50%"></div>
<div class="a" style="left:64.5px;top:340px;width:6px;height:0.5px;background:#ccc"></div>
<div class="a" style="left:64.5px;top:342px;width:6px;height:0.5px;background:#ccc"></div>
<div class="a" style="left:64.8px;top:345.5px;width:5.2px;height:1.6px;background:#e8404a"></div>
<div class="a" style="left:47px;top:349.5px;width:6px;height:0.6px;background:#999"></div>
<div class="a" style="left:47px;top:352.5px;width:28px;height:0.5px;background:#ddd"></div>
<div class="a" style="left:54px;top:354.5px;width:3px;height:0.9px;background:#e88"></div>
<div class="a" style="left:47px;top:357.8px;width:27px;height:1.3px;background:#3a4a3a"></div>
<div class="t" style="left:20.80px;top:136.75px;font-size:9.5px;font-weight:normal;font-style:normal;color:#d24726;font-family:'Liberation Sans',sans-serif;">1</div>
<div class="t" style="left:20.80px;top:184.15px;font-size:9.5px;font-weight:normal;font-style:normal;color:#5a5a5a;font-family:'Liberation Sans',sans-serif;">2</div>
<div class="t" style="left:20.80px;top:230.65px;font-size:9.5px;font-weight:normal;font-style:normal;color:#5a5a5a;font-family:'Liberation Sans',sans-serif;">3</div>
<div class="t" style="left:20.80px;top:277.65px;font-size:9.5px;font-weight:normal;font-style:normal;color:#5a5a5a;font-family:'Liberation Sans',sans-serif;">4</div>
<div class="t" style="left:20.80px;top:324.65px;font-size:9.5px;font-weight:normal;font-style:normal;color:#5a5a5a;font-family:'Liberation Sans',sans-serif;">5</div>
<div class="a" style="left:657.5px;top:55.7px;width:73.5px;height:97.3px;background:radial-gradient(ellipse 60% 55% at 50% 48%,#7d2aa8 0%,#6a1f9a 55%,#5c188c 100%);border-radius:8px;box-shadow:inset 0 0 0 1.5px #e9b7ff"></div>
<div class="a" style="left:678.7px;top:88.2px;width:31.4px;height:31.4px;background:#6a1b9a;border:2.2px solid #eac2ff;border-radius:50%"></div>
<div class="a" style="left:738px;top:55.7px;width:73px;height:97.3px;background:radial-gradient(ellipse 60% 55% at 50% 50%,#a63c1a 0%,#922e10 55%,#80260a 100%);border-radius:8px;"></div>
<div class="a" style="left:792.6px;top:60.5px;width:12.8px;height:12.8px;background:#5a1c0c;border-radius:50%"></div>
<svg style="left:793.6px;top:61.5px;" width="11" height="11" viewBox="0 0 11 11"><rect x="4.3" y="1.5" width="2.4" height="4.5" rx="1.2" fill="#e9b8a8"/><path d="M3 5a2.5 2.5 0 0 0 5 0M5.5 7.5v1.5" stroke="#e9b8a8" stroke-width="0.9" fill="none"/><path d="M2.2 2l6.6 6.6" stroke="#e9b8a8" stroke-width="1"/></svg>
<div class="a" style="left:760.2px;top:90px;width:28.4px;height:28.4px;background:#c33d10;border-radius:50%"></div>
<div class="a" style="left:818px;top:55.7px;width:73px;height:97.3px;background:radial-gradient(ellipse 60% 55% at 50% 50%,#ac2a60 0%,#9a2054 55%,#8a1a4a 100%);border-radius:8px;"></div>
<div class="a" style="left:872.6px;top:60.5px;width:12.8px;height:12.8px;background:#5c0e2e;border-radius:50%"></div>
<svg style="left:873.6px;top:61.5px;" width="11" height="11" viewBox="0 0 11 11"><rect x="4.3" y="1.5" width="2.4" height="4.5" rx="1.2" fill="#f0b8cc"/><path d="M3 5a2.5 2.5 0 0 0 5 0M5.5 7.5v1.5" stroke="#f0b8cc" stroke-width="0.9" fill="none"/><path d="M2.2 2l6.6 6.6" stroke="#f0b8cc" stroke-width="1"/></svg>
<div class="a" style="left:840.2px;top:90px;width:28.4px;height:28.4px;background:#ec4884;border-radius:50%"></div>
<div class="a" style="left:657.5px;top:160.7px;width:73.5px;height:97.3px;background:radial-gradient(ellipse 80% 45% at 40% 25%,#56626a 0%,#465560 50%,rgba(40,70,90,0) 100%),linear-gradient(180deg,#4a5862 0%,#3a4c5a 40%,#203c52 75%,#1a3850 100%);border-radius:8px;"></div>
<div class="a" style="left:712.6px;top:165.5px;width:12.8px;height:12.8px;background:#183a5e;border-radius:50%"></div>
<svg style="left:713.6px;top:166.5px;" width="11" height="11" viewBox="0 0 11 11"><rect x="4.3" y="1.5" width="2.4" height="4.5" rx="1.2" fill="#c6dcf0"/><path d="M3 5a2.5 2.5 0 0 0 5 0M5.5 7.5v1.5" stroke="#c6dcf0" stroke-width="0.9" fill="none"/><path d="M2.2 2l6.6 6.6" stroke="#c6dcf0" stroke-width="1"/></svg>
<svg style="left:680.4px;top:195px;" width="28.4" height="28.4" viewBox="0 0 28.4 28.4"><defs><clipPath id="c1"><circle cx="14.2" cy="14.2" r="14.2"/></clipPath><linearGradient id="g1" x1="0" x2="1"><stop offset="0" stop-color="#d8c8b0"/><stop offset="0.6" stop-color="#e8e2d8"/><stop offset="1" stop-color="#f4f4f2"/></linearGradient></defs><g clip-path="url(#c1)"><rect width="28.4" height="28.4" fill="url(#g1)"/><path d="M3 29c0-6 4-9.5 11-9.5s11 3.5 11 9.5z" fill="#141414"/><rect x="11" y="15" width="6" height="5.5" fill="#9a7a64"/><ellipse cx="14.2" cy="12.5" rx="4.6" ry="5.6" fill="#b48c72"/><path d="M9.2 11.5c-.4-4 2-6.5 5-6.5s5.6 2 5.2 6.3c-.8-1.8-2.4-2.6-5-2.6s-4.4 1-5.2 2.8z" fill="#221a14"/></g></svg>
<div class="a" style="left:738px;top:160.7px;width:73px;height:97.3px;background:radial-gradient(ellipse 60% 40% at 50% 45%,#9a5a40 0%,rgba(140,80,55,0) 100%),linear-gradient(180deg,#8a5a4c 0%,#864c38 40%,#763c26 75%,#6a3622 100%);border-radius:8px;"></div>
<div class="a" style="left:792.6px;top:165.5px;width:12.8px;height:12.8px;background:#781f0a;border-radius:50%"></div>
<svg style="left:793.6px;top:166.5px;" width="11" height="11" viewBox="0 0 11 11"><rect x="4.3" y="1.5" width="2.4" height="4.5" rx="1.2" fill="#f0c0b0"/><path d="M3 5a2.5 2.5 0 0 0 5 0M5.5 7.5v1.5" stroke="#f0c0b0" stroke-width="0.9" fill="none"/><path d="M2.2 2l6.6 6.6" stroke="#f0c0b0" stroke-width="1"/></svg>
<svg style="left:760.2px;top:195px;" width="28.4" height="28.4" viewBox="0 0 28.4 28.4"><defs><clipPath id="c2"><circle cx="14.2" cy="14.2" r="14.2"/></clipPath></defs><g clip-path="url(#c2)"><rect width="28.4" height="28.4" fill="#e6e4e0"/><rect x="0" y="6" width="7" height="20" fill="#d8b8b0"/><rect x="2" y="12" width="4" height="6" fill="#c86a5a"/><rect x="21.5" y="5" width="7" height="22" fill="#b8d0e8"/><rect x="22" y="15" width="6.4" height="10" fill="#e8c040"/><path d="M4 29c0-5.5 4.5-8 10.2-8s10.2 2.5 10.2 8z" fill="#24385a"/><path d="M11 21l3.2 2.2 3.2-2.2" stroke="#f0f0f0" stroke-width="1" fill="none"/><rect x="11.5" y="16" width="5.4" height="5.5" fill="#b08878"/><ellipse cx="14.2" cy="12.8" rx="4.6" ry="5.8" fill="#c89c88"/><path d="M9.4 11.2c0-3.8 2-5.6 4.8-5.6s4.8 1.8 4.8 5.6c-.6-1.4-2.2-2.2-4.8-2.2s-4.2.8-4.8 2.2z" fill="#8a8a88"/></g></svg>
<div class="a" style="left:818px;top:160.7px;width:73px;height:97.3px;background:linear-gradient(180deg,#2c4a66 0%,#2a4660 40%,#1d3a54 80%,#1a3650 100%);border-radius:8px;"></div>
<div class="a" style="left:872.6px;top:165.5px;width:12.8px;height:12.8px;background:#143458;border-radius:50%"></div>
<svg style="left:873.6px;top:166.5px;" width="11" height="11" viewBox="0 0 11 11"><rect x="4.3" y="1.5" width="2.4" height="4.5" rx="1.2" fill="#c0d8f0"/><path d="M3 5a2.5 2.5 0 0 0 5 0M5.5 7.5v1.5" stroke="#c0d8f0" stroke-width="0.9" fill="none"/><path d="M2.2 2l6.6 6.6" stroke="#c0d8f0" stroke-width="1"/></svg>
<svg style="left:840.2px;top:195px;" width="28.4" height="28.4" viewBox="0 0 28.4 28.4"><defs><clipPath id="c3"><circle cx="14.2" cy="14.2" r="14.2"/></clipPath><linearGradient id="g3" x1="0" y1="0" x2="0" y2="1"><stop offset="0" stop-color="#5a90d0"/><stop offset="0.45" stop-color="#d8e6f4"/><stop offset="0.55" stop-color="#c8ccd0"/></linearGradient></defs><g clip-path="url(#c3)"><rect width="28.4" height="28.4" fill="url(#g3)"/><ellipse cx="8" cy="8" rx="6" ry="2.5" fill="#f0f4f8"/><ellipse cx="20" cy="5" rx="5" ry="2" fill="#e8f0f8"/><rect x="0" y="17" width="28.4" height="12" fill="#3a3a3c"/><rect x="0" y="21" width="28.4" height="8" fill="#2a2a2c"/><path d="M3 18l3-4h8l2 4z" fill="#c0c4c8"/><rect x="4" y="14.5" width="10" height="5" rx="1" fill="#9a1c20"/><rect x="14" y="11.5" width="12" height="7" rx="1" fill="#8a9096"/><rect x="15.5" y="12.5" width="8" height="2.5" fill="#3a4048"/><circle cx="7" cy="20" r="1.5" fill="#111"/><circle cx="22" cy="19.5" r="1.5" fill="#111"/></g></svg>
<div class="a" style="left:657.3px;top:265.8px;width:113.2px;height:98px;background:#3b3c3f;border-radius:8px"></div>
<div class="a" style="left:691.5px;top:297px;width:24px;height:24px;background:#0b0b0c;border-radius:50%"></div>
<div class="a" style="left:711.7px;top:295.2px;width:27px;height:27px;background:#3b3c3f;border-radius:50%"></div>
<svg style="left:713.2px;top:296.7px;" width="24" height="24" viewBox="0 0 24 24"><defs><clipPath id="c4"><circle cx="12" cy="12" r="12"/></clipPath><radialGradient id="g4" cx="0.5" cy="0.4" r="0.7"><stop offset="0" stop-color="#a8c080"/><stop offset="1" stop-color="#5a8a3a"/></radialGradient></defs><g clip-path="url(#c4)"><rect width="24" height="24" fill="url(#g4)"/><path d="M5 13c-1-6 2-10 7-10s8 4 7 10l-1.5 5h-11z" fill="#c8643a"/><path d="M3 25c0-4.5 4-6.5 9-6.5s9 2 9 6.5z" fill="#f4f2f0"/><ellipse cx="12" cy="12.5" rx="4.6" ry="5.4" fill="#f2c8ac"/><path d="M7.2 11c.5-3.5 2.5-5 4.8-5s4.5 1.5 4.8 5c-1.3-1.6-3-2.2-4.8-2.2S8.5 9.4 7.2 11z" fill="#d07040"/></g></svg>
<div class="a" style="left:777.8px;top:265.8px;width:113.6px;height:98px;background:radial-gradient(ellipse 50% 65% at 50% 25%,#7e3e1e 0%,#6a3218 45%,#522814 100%);border-radius:8px;"></div>
<div class="a" style="left:873.0px;top:270.6px;width:12.8px;height:12.8px;background:#8a3410;border-radius:50%"></div>
<svg style="left:874.0px;top:271.6px;" width="11" height="11" viewBox="0 0 11 11"><rect x="4.3" y="1.5" width="2.4" height="4.5" rx="1.2" fill="#f0c0a0"/><path d="M3 5a2.5 2.5 0 0 0 5 0M5.5 7.5v1.5" stroke="#f0c0a0" stroke-width="0.9" fill="none"/><path d="M2.2 2l6.6 6.6" stroke="#f0c0a0" stroke-width="1"/></svg>
<svg style="left:820.7px;top:300.6px;" width="28" height="28" viewBox="0 0 28 28"><defs><clipPath id="c5"><circle cx="14" cy="14" r="14"/></clipPath><linearGradient id="g5" x1="0" x2="1"><stop offset="0" stop-color="#4a5458"/><stop offset="0.7" stop-color="#8a949a"/><stop offset="1" stop-color="#b0b8bc"/></linearGradient></defs><g clip-path="url(#c5)"><rect width="28" height="28" fill="url(#g5)"/><path d="M5 22c-1-9 1.5-17 9-17s10 8 9 17z" fill="#2a1e18"/><path d="M4 29c0-5 4.5-7.5 10-7.5s10 2.5 10 7.5z" fill="#3e3e3c"/><rect x="11.8" y="16" width="4.4" height="5" fill="#c89a80"/><ellipse cx="14" cy="13" rx="4.6" ry="5.8" fill="#e2b89c"/><path d="M9.2 11.5c.3-4 2.2-5.5 4.8-5.5s4.6 1.6 4.8 5.5c-1-2-2.6-3-4.8-3s-3.8 1-4.8 3z" fill="#2a1e18"/></g></svg>
<div class="t" style="left:663.50px;top:141.28px;font-size:8px;font-weight:bold;font-style:normal;color:#fff;font-family:'Liberation Sans',sans-serif;transform:scaleX(0.8795);transform-origin:left top;">Дмитрий Дво...</div>
<div class="t" style="left:689.32px;top:96.65px;font-size:15px;font-weight:normal;font-style:normal;color:#fff;font-family:'Liberation Sans',sans-serif;">Д</div>
<div class="t" style="left:744.00px;top:141.28px;font-size:8px;font-weight:bold;font-style:normal;color:#fff;font-family:'Liberation Sans',sans-serif;transform:scaleX(0.8760);transform-origin:left top;">Олена Волод...</div>
<div class="t" style="left:768.57px;top:96.65px;font-size:15px;font-weight:normal;font-style:normal;color:#fff;font-family:'Liberation Sans',sans-serif;">О</div>
<div class="t" style="left:824.00px;top:141.28px;font-size:8px;font-weight:bold;font-style:normal;color:#fff;font-family:'Liberation Sans',sans-serif;transform:scaleX(0.8631);transform-origin:left top;">Yuriy Kozub</div>
<div class="t" style="left:849.40px;top:96.65px;font-size:15px;font-weight:normal;font-style:normal;color:#fff;font-family:'Liberation Sans',sans-serif;">Y</div>
<div class="t" style="left:663.50px;top:246.28px;font-size:8px;font-weight:bold;font-style:normal;color:#fff;font-family:'Liberation Sans',sans-serif;transform:scaleX(0.8363);transform-origin:left top;">Биньковский ...</div>
<div class="t" style="left:744.00px;top:246.28px;font-size:8px;font-weight:bold;font-style:normal;color:#fff;font-family:'Liberation Sans',sans-serif;transform:scaleX(0.8737);transform-origin:left top;">Леонід Руденко</div>
<div class="t" style="left:824.00px;top:246.28px;font-size:8px;font-weight:bold;font-style:normal;color:#fff;font-family:'Liberation Sans',sans-serif;transform:scaleX(0.8645);transform-origin:left top;">Даніїл Лисенко</div>
<div class="t" style="left:696.70px;top:325.58px;font-size:8px;font-weight:bold;font-style:normal;color:#fff;font-family:'Liberation Sans',sans-serif;transform:scaleX(0.8186);transform-origin:left top;">Ще 11 осіб</div>
<div class="a" style="left:675.8px;top:334.5px;width:210.6px;height:44.5px;background:#404345;border-radius:6px;box-shadow:0 1px 3px rgba(0,0,0,0.4)"></div>
<div class="a" style="left:675.8px;top:334.5px;width:80.2px;height:44.5px;background:#48484b;border-radius:6px 0 0 6px"></div>
<div class="a" style="left:698.8px;top:340.5px;width:32.8px;height:32.8px;background:#8c22b8;border-radius:50%"></div>
<div class="t" style="left:708.43px;top:346.00px;font-size:20px;font-weight:normal;font-style:normal;color:#fff;font-family:'Liberation Sans',sans-serif;">Д</div>
<div class="t" style="left:764.90px;top:347.09px;font-size:9px;font-weight:bold;font-style:normal;color:#e8e8e8;font-family:'Liberation Sans',sans-serif;transform:scaleX(0.9104);transform-origin:left top;">Дмитрий Дворников</div>
<div class="t" style="left:764.90px;top:358.09px;font-size:9px;font-weight:bold;font-style:normal;color:#e8e8e8;font-family:'Liberation Sans',sans-serif;transform:scaleX(0.9166);transform-origin:left top;">починає презентацію</div>
<div class="a" style="left:43.5px;top:396.5px;width:1px;height:10px;background:#8a8a8a"></div>
<div class="a" style="left:285.3px;top:388.7px;width:30px;height:28px;background:#5f1410;border-radius:7px"></div>
<svg style="left:295.5px;top:399px;" width="7" height="5" viewBox="0 0 7 5"><path d="M0.8 4L3.5 1.2 6.2 4" stroke="#f3d6d2" stroke-width="1.1" fill="none"/></svg>
<div class="a" style="left:308.7px;top:388.2px;width:28.6px;height:28.5px;background:#f9dedc;border-radius:8px"></div>
<svg style="left:316.8px;top:396.6px;" width="12" height="12.2" viewBox="0 0 12 12.2"><rect x="4.4" y="1" width="3.2" height="6" rx="1.6" fill="none" stroke="#5f1410" stroke-width="1.2"/><path d="M2.6 5.8a3.4 3.4 0 0 0 6.8 0M6 9.2v2.2" stroke="#5f1410" stroke-width="1.2" fill="none"/><path d="M1.2 1.2l9.6 9.6" stroke="#f9dedc" stroke-width="2.4"/><path d="M1.2 1.2l9.6 9.6" stroke="#5f1410" stroke-width="1.2"/></svg>
<div class="a" style="left:342px;top:388.7px;width:30px;height:28px;background:#5f1410;border-radius:7px"></div>
<svg style="left:352.3px;top:399px;" width="7" height="5" viewBox="0 0 7 5"><path d="M0.8 4L3.5 1.2 6.2 4" stroke="#f3d6d2" stroke-width="1.1" fill="none"/></svg>
<div class="a" style="left:364.7px;top:388.2px;width:28.6px;height:28.5px;background:#f9dedc;border-radius:8px"></div>
<svg style="left:373.3px;top:396.5px;" width="12.5" height="12.5" viewBox="0 0 12.5 12.5"><path d="M1.2 2.5h7.4v7.5H1.2zM8.6 5l3-1.8v6.1l-3-1.8" stroke="#5f1410" stroke-width="1.3" fill="none"/><path d="M0.5 0.8l11 11" stroke="#f9dedc" stroke-width="2.4"/><path d="M0.5 0.8l11 11" stroke="#5f1410" stroke-width="1.3"/></svg>
<div class="a" style="left:397.7px;top:388.7px;width:33.30000000000001px;height:28px;background:#333537;border-radius:14px"></div>
<div class="a" style="left:435.7px;top:388.7px;width:32.60000000000002px;height:28px;background:#333537;border-radius:14px"></div>
<div class="a" style="left:473px;top:388.7px;width:32.69999999999999px;height:28px;background:#333537;border-radius:14px"></div>
<div class="a" style="left:510.3px;top:388.7px;width:33.400000000000034px;height:28px;background:#333537;border-radius:14px"></div>
<div class="a" style="left:548px;top:388.7px;width:20.7px;height:28px;background:#333537;border-radius:10px"></div>
<div class="a" style="left:573.7px;top:388.7px;width:42.6px;height:28px;background:#dc362e;border-radius:14px"></div>
<svg style="left:408.3px;top:397.3px;" width="12" height="10" viewBox="0 0 12 10"><rect x="0.8" y="0.8" width="10.4" height="8.4" rx="1" fill="none" stroke="#f4f4f4" stroke-width="1.5"/><path d="M5.2 3.6H3v2.8h2.2M9 3.6H6.8v2.8H9" stroke="#f4f4f4" stroke-width="1.2" fill="none"/></svg>
<svg style="left:445.7px;top:396.3px;" width="12.6" height="12.6" viewBox="0 0 12.6 12.6"><circle cx="6.3" cy="6.3" r="5.4" fill="none" stroke="#f4f4f4" stroke-width="1.5"/><circle cx="4.4" cy="5" r="0.9" fill="#f4f4f4"/><circle cx="8.2" cy="5" r="0.9" fill="#f4f4f4"/><path d="M3.6 7.2c.6 1.4 1.5 2 2.7 2s2.1-.6 2.7-2z" fill="#f4f4f4"/></svg>
<svg style="left:482.3px;top:397.3px;" width="13.4" height="10" viewBox="0 0 13.4 10"><rect x="0.8" y="0.8" width="11.8" height="8.4" rx="0.8" fill="none" stroke="#f4f4f4" stroke-width="1.5"/><path d="M6.7 7.6V4.2" stroke="#f4f4f4" stroke-width="1.5"/><path d="M4.2 5.4L6.7 2.8 9.2 5.4z" fill="#f4f4f4"/></svg>
<svg style="left:520.3px;top:396.7px;" width="13.4" height="12.6" viewBox="0 0 13.4 12.6"><path d="M3.2 7.2V3.3a1 1 0 0 1 2 0V6M5.2 6V1.8a1 1 0 0 1 2 0V6M7.2 6V2.3a1 1 0 0 1 2 0V6.5M9.2 6.5V3.8a1 1 0 0 1 2 0v3.6c0 2.9-1.9 4.5-4.3 4.5-1.7 0-2.6-.8-3.4-2L1.3 7.4a1 1 0 0 1 1.6-1L3.2 7" stroke="#f4f4f4" stroke-width="1.3" fill="none"/></svg>
<div class="a" style="left:557px;top:396.5px;width:2.4px;height:2.4px;background:#f4f4f4;border-radius:50%"></div>
<div class="a" style="left:557px;top:401.5px;width:2.4px;height:2.4px;background:#f4f4f4;border-radius:50%"></div>
<div class="a" style="left:557px;top:406.5px;width:2.4px;height:2.4px;background:#f4f4f4;border-radius:50%"></div>
<svg style="left:587.7px;top:400.3px;" width="14" height="6" viewBox="0 0 14 6"><path d="M1.2 4.8c-.4-.4-.4-1.1 0-1.5C3 1.8 4.9 1 7 1s4 .8 5.8 2.3c.4.4.4 1.1 0 1.5l-1 .9c-.3.3-.8.3-1.2.1l-1.4-.9c-.3-.2-.4-.5-.4-.8V3.1c-1.2-.3-2.4-.3-3.6 0v1c0 .3-.2.6-.4.8l-1.4.9c-.4.2-.9.2-1.2-.1z" fill="#fff"/></svg>
<svg style="left:761.8px;top:395.8px;" width="11" height="11" viewBox="0 0 11 11"><circle cx="5.5" cy="5.5" r="4.7" fill="none" stroke="#e8e8e8" stroke-width="1.3"/></svg>
<div class="a" style="left:795.8px;top:383.6px;width:15px;height:11.4px;background:#5b5e62;border-radius:6px"></div>
<svg style="left:788.7px;top:397.5px;" width="14" height="10.5" viewBox="0 0 14 10.5"><circle cx="5" cy="2.8" r="2.2" fill="none" stroke="#f0f0f0" stroke-width="1.5"/><path d="M0.9 9.6c0-2.1 1.8-3.2 4.1-3.2s4.1 1.1 4.1 3.2z" fill="none" stroke="#f0f0f0" stroke-width="1.5"/><path d="M9 0.8a2.2 2.2 0 0 1 0 4.2M11 6.5c1.2.5 2.2 1.5 2.2 3" stroke="#f0f0f0" stroke-width="1.5" fill="none"/></svg>
<svg style="left:817.3px;top:396px;" width="13" height="13" viewBox="0 0 13 13"><path d="M1 1h11v8.2H3.5L1 11.8z" fill="none" stroke="#f0f0f0" stroke-width="1.5"/><path d="M3.3 3.6h6.4M3.3 5.4h6.4M3.3 7.2h4" stroke="#f0f0f0" stroke-width="1.1"/></svg>
<svg style="left:846.7px;top:397.7px;" width="11" height="11" viewBox="0 0 11 11"><circle cx="1.3" cy="1.3" r="1.2" fill="#f0f0f0"/><circle cx="1.3" cy="5.2" r="1.2" fill="#f0f0f0"/><circle cx="1.3" cy="9.1" r="1.2" fill="#f0f0f0"/><circle cx="5.2" cy="1.3" r="1.2" fill="#f0f0f0"/><circle cx="5.2" cy="5.2" r="1.2" fill="#f0f0f0"/><circle cx="5.2" cy="9.1" r="1.2" fill="#f0f0f0"/><circle cx="9.1" cy="1.3" r="1.2" fill="#f0f0f0"/><circle cx="9.1" cy="5.2" r="1.2" fill="#f0f0f0"/><circle cx="9.1" cy="9.1" r="1.2" fill="#f0f0f0"/></svg>
<div class="a" style="left:875.3px;top:387px;width:30px;height:22px;background:#fff;border-radius:9px 0 0 4px"></div>
<svg style="left:884px;top:392.6px;" width="11" height="10.5" viewBox="0 0 11 10.5"><defs><linearGradient id="gb" gradientUnits="userSpaceOnUse" x1="0" y1="0" x2="11" y2="0"><stop offset="0" stop-color="#f23c96"/><stop offset="0.45" stop-color="#9a48f0"/><stop offset="1" stop-color="#3a78f8"/></linearGradient></defs><path d="M5.2 0.8C3.6 0 1.8 1 1.6 2.6 .4 3.2 0 5.2 .9 6.2c-.3 1.7 1 3.3 2.7 3 .4.4 1 .6 1.6.4z" fill="url(#gb)"/><path d="M5.8 0.8c1.6-.8 3.4.2 3.6 1.8 1.2.6 1.6 2.6.7 3.6.3 1.7-1 3.3-2.7 3-.4.4-1 .6-1.6.4z" fill="url(#gb)"/><path d="M2.6 3.3h1.8M2.4 6.3h2M6.6 3.3h1.8M6.6 6.3h2" stroke="#fff" stroke-width="0.6" opacity="0.8"/></svg>
<svg style="left:876px;top:400.5px;" width="5" height="7" viewBox="0 0 5 7"><path d="M0.6 0.5L4.5 6.5H0.6z" fill="#161618"/></svg>
<div class="a" style="left:658.7px;top:400.3px;width:127.1px;height:17.5px;background:#dddddf;border-radius:4px"></div>
<div class="t" style="left:13.70px;top:396.85px;font-size:9.5px;font-weight:bold;font-style:normal;color:#f0f0f0;font-family:'Liberation Sans',sans-serif;transform:scaleX(0.9425);transform-origin:left top;">13:42</div>
<div class="t" style="left:50.70px;top:396.85px;font-size:9.5px;font-weight:bold;font-style:normal;color:#f0f0f0;font-family:'Liberation Sans',sans-serif;transform:scaleX(1.0401);transform-origin:left top;">fqq-ubuw-mbi</div>
<div class="t" style="left:799.13px;top:385.82px;font-size:7.5px;font-weight:bold;font-style:normal;color:#f0f0f0;font-family:'Liberation Sans',sans-serif;">19</div>
<div class="t" style="left:664.00px;top:404.79px;font-size:9px;font-weight:normal;font-style:normal;color:#2c2c2c;font-family:'Liberation Sans',sans-serif;transform:scaleX(0.8066);transform-origin:left top;">Відображати приховані піктограми</div>
</body></html>
